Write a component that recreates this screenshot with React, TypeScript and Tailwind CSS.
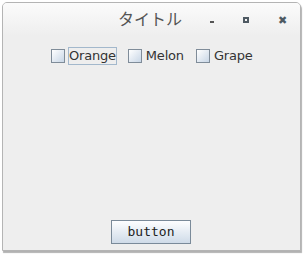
import { useState } from 'react'

const FRUITS = ['Orange', 'Melon', 'Grape']

function Check({ label, focused }: { label: string; focused?: boolean }) {
  const [on, setOn] = useState(false)
  return (
    <label className="flex items-center gap-[3px] cursor-default" onClick={() => setOn(!on)}>
      <span className="block h-[14px] w-[14px] border border-[#7f8c99] bg-gradient-to-br from-[#ffffff] to-[#c8d6e6]">
        {on && <span className="block text-[11px] leading-[12px] text-center">✓</span>}
      </span>
      <span
        className={`text-[13px] leading-[16px] tracking-[-0.2px] text-[#333] ${
          focused ? 'border border-[#a3b8cc]' : 'border border-transparent'
        }`}
      >
        {label}
      </span>
    </label>
  )
}

export default function App() {
  return (
    <div className="h-[254px] w-[303px] bg-white pl-[2px] pt-[2px] font-['DejaVu_Sans',sans-serif]">
      <div className="flex h-[249px] w-[299px] flex-col overflow-hidden rounded-t-[5px] border border-[#b4b4b4] bg-[#eeeeee] shadow-[1px_2px_1px_rgba(0,0,0,0.3)]">
        {/* title bar */}
        <div className="flex h-[33px] items-center bg-gradient-to-b from-[#fbfbfb] to-[#eeeeee]">
          <div className="ml-[115px] -mt-[3px] w-[70px] text-[16px] text-[#555] font-['Noto_Sans_CJK_JP',sans-serif]">
            タイトル
          </div>
          <div className="ml-[22px] mt-[5px] h-[2px] w-[4px] bg-[#555]" />
          <div className="ml-[29px] mt-[1px] h-[6px] w-[6px] border-[2px] border-[#4f5a63]" />
          <div className="ml-[29px] mt-[1px] text-[11px] font-bold leading-none text-[#4f5a63]">✖</div>
        </div>
        {/* check boxes */}
        <div className="mt-[11px] flex gap-[11px] pl-[48px]">
          {FRUITS.map((f, i) => (
            <Check key={f} label={f} focused={i === 0} />
          ))}
        </div>
        <div className="flex-1" />
        <div className="mb-[6px] flex justify-center pr-[1px]">
          <button className="h-[24px] w-[80px] border border-[#7a8a99] bg-gradient-to-b from-[#fdfeff] to-[#cfdbe8] font-['DejaVu_Sans_Mono',monospace] text-[13px] text-[#222]">
            button
          </button>
        </div>
      </div>
    </div>
  )
}
